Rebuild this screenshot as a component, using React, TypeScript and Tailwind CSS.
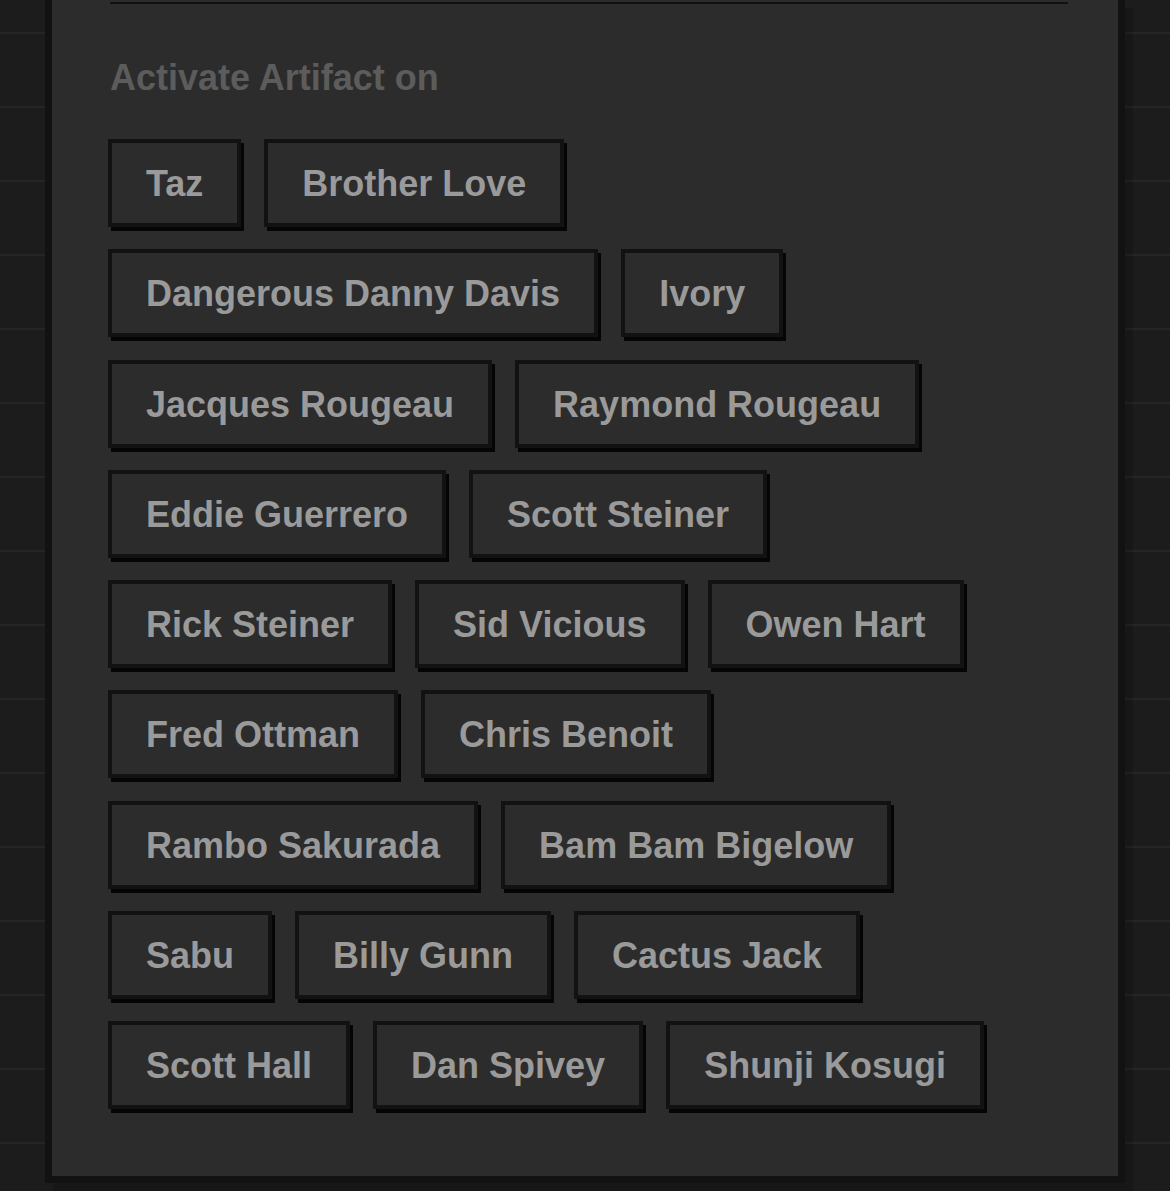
const wrestlers = [
  "Taz",
  "Brother Love",
  "Dangerous Danny Davis",
  "Ivory",
  "Jacques Rougeau",
  "Raymond Rougeau",
  "Eddie Guerrero",
  "Scott Steiner",
  "Rick Steiner",
  "Sid Vicious",
  "Owen Hart",
  "Fred Ottman",
  "Chris Benoit",
  "Rambo Sakurada",
  "Bam Bam Bigelow",
  "Sabu",
  "Billy Gunn",
  "Cactus Jack",
  "Scott Hall",
  "Dan Spivey",
  "Shunji Kosugi",
];

const TargetButton = ({ name }: { name: string }) => {
  return (
    <button
      type="button"
      className="border-4 border-[#121212] bg-[#2c2c2c] px-[34px] pt-[21px] pb-[19px] text-[36px] leading-[40px] font-bold text-[#9a9a9a] shadow-[3px_4px_0_#050505]"
    >
      {name}
    </button>
  );
};

export default function App() {
  return (
    <div
      className="min-h-screen bg-[#1c1c1c] px-[45px] [background-image:linear-gradient(to_bottom,#252525_0,#252525_2px,transparent_2px)] [background-size:100%_74px] [background-position:0_32px]"
      style={{ fontFamily: '"Liberation Sans", Arial, sans-serif' }}
    >
      <div className="border-x-[7px] border-b-[7px] border-[#121212] bg-[#2c2c2c] pl-[56px] pr-[50px] pb-[67px] shadow-[8px_8px_0_rgba(0,0,0,0.15)]">
        <div className="ml-[2px] pt-[2px]">
          <div className="h-[2px] bg-[#111111]" />
        </div>
        <h2 className="ml-[2px] mt-[54px] text-[36px] leading-[40px] font-bold text-[#5c5c5c]">
          Activate Artifact on
        </h2>
        <div className="mt-[41px] flex flex-wrap gap-x-[23px] gap-y-[22.25px]">
          {wrestlers.map((w) => (
            <TargetButton key={w} name={w} />
          ))}
        </div>
      </div>
    </div>
  );
}
